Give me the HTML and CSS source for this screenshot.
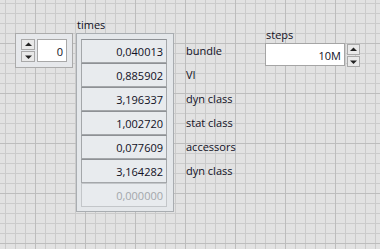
FILE: index.html
```html
<!DOCTYPE html>
<html>
  <head>
    <title>Front Panel</title>
    <link rel="stylesheet" href="styles.css">
  </head>
  <body>
    <div class="panel">
      <!-- array index control -->
      <div class="index-box">
        <div class="spin">
          <div class="spin-btn"><svg width="9" height="6" viewBox="0 0 9 6"><polygon points="1,4 8,4 4.5,0.5" fill="#222"/></svg></div>
          <div class="spin-btn"><svg width="9" height="6" viewBox="0 0 9 6"><polygon points="1,1.5 8,1.5 4.5,5" fill="#222"/></svg></div>
        </div>
        <div class="num-input">0</div>
      </div>

      <!-- times array -->
      <div class="array">
        <div class="label">times</div>
        <div class="array-frame">
          <div class="cell">0,040013</div>
          <div class="cell">0,885902</div>
          <div class="cell">3,196337</div>
          <div class="cell">1,002720</div>
          <div class="cell">0,077609</div>
          <div class="cell">3,164282</div>
          <div class="cell empty">0,000000</div>
        </div>
      </div>

      <!-- free labels next to the rows -->
      <div class="row-labels">
        <div class="row-label">bundle</div>
        <div class="row-label">VI</div>
        <div class="row-label">dyn class</div>
        <div class="row-label">stat class</div>
        <div class="row-label">accessors</div>
        <div class="row-label">dyn class</div>
      </div>

      <!-- steps control -->
      <div class="steps">
        <div class="label">steps</div>
        <div class="steps-row">
          <div class="steps-input">10M</div>
          <div class="spin">
            <div class="spin-btn"><svg width="9" height="6" viewBox="0 0 9 6"><polygon points="1,4 8,4 4.5,0.5" fill="#222"/></svg></div>
            <div class="spin-btn"><svg width="9" height="6" viewBox="0 0 9 6"><polygon points="1,1.5 8,1.5 4.5,5" fill="#222"/></svg></div>
          </div>
        </div>
      </div>
    </div>
  </body>
</html>
```

FILE: styles.css
```css
/* LabVIEW style front panel with grid */
body {
  margin: 0;
  width: 380px;
  height: 249px;
  overflow: hidden;
  font-family: "Open Sans", "Noto Sans", sans-serif;
  font-size: 11px;
  color: #101024;
  background-color: #e2e2e2;
  background-image:
    linear-gradient(to right, #bdbdbd 1px, transparent 1px),
    linear-gradient(to bottom, #bdbdbd 1px, transparent 1px),
    linear-gradient(to right, #cbcbcb 1px, transparent 1px),
    linear-gradient(to bottom, #cbcbcb 1px, transparent 1px);
  background-size: 50px 50px, 50px 50px, 10px 10px, 10px 10px;
  background-position: 35px 0, 0 43px, 5px 0, 0 3px;
}

.panel {
  display: flex;
  align-items: flex-start;
  padding-left: 15px;
}

.label {
  height: 18px;
  line-height: 19px;
  padding-left: 1px;
}

.index-box {
  margin-top: 33px;
  box-sizing: border-box;
  width: 58px;
  height: 35px;
  padding: 5px;
  border: 1px solid #ababab;
  background: #e6e8eb;
  display: flex;
  gap: 2px;
}

.spin {
  display: flex;
  flex-direction: column;
  gap: 1px;
}

.spin-btn {
  box-sizing: border-box;
  width: 14px;
  height: 11px;
  border: 1px solid #a9a9a9;
  background: #e9e9e9;
  display: flex;
  align-items: center;
  justify-content: center;
}

.num-input {
  box-sizing: border-box;
  width: 30px;
  height: 23px;
  line-height: 21px;
  padding-top: 1px;
  border: 1px solid #a8a8a8;
  background: #fff;
  text-align: right;
  padding-right: 3px;
}

.array {
  margin-left: 3px;
  margin-top: 15px;
}

.array-frame {
  box-sizing: border-box;
  width: 98px;
  height: 179px;
  border: 1px solid #a9adb1;
  background: #e4e7ea;
  padding: 5px 6px 4px 4px;
}

.cell {
  box-sizing: border-box;
  height: 24px;
  line-height: 21px;
  padding-top: 1px;
  border: 1px solid #a4a7aa;
  border-top-color: #8e9195;
  background: #e8ebee;
  text-align: right;
  padding-right: 3px;
}

.cell.empty {
  color: #a3a7ab;
  border-color: #c3c6c9;
}

.row-labels {
  margin-left: 12px;
  margin-top: 39px;
  width: 79px;
}

.row-label {
  height: 24px;
  line-height: 24px;
}

.steps {
  margin-top: 25px;
}

.steps-row {
  display: flex;
  gap: 2px;
  align-items: flex-start;
}

.steps-input {
  box-sizing: border-box;
  width: 80px;
  height: 23px;
  line-height: 21px;
  padding-top: 1px;
  border: 1px solid #a5a5a5;
  background: #fff;
  text-align: right;
  padding-right: 3px;
}

.steps-row .spin {
  margin-top: 1px;
}

.steps-row .spin-btn {
  width: 13px;
}
```
